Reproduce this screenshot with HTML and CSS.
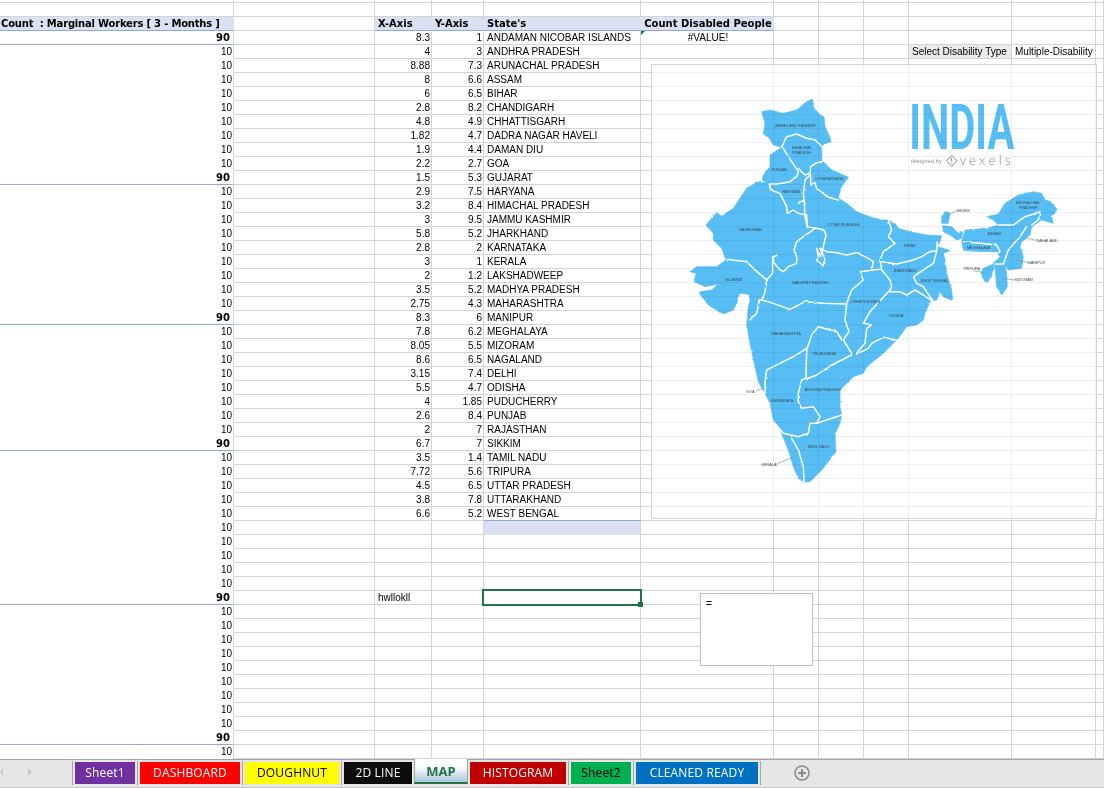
FILE: index.html
```html
<!DOCTYPE html>
<html lang="en">

<head>
  <meta charset="UTF-8">
  <title>MAP - Disability workbook</title>
  <link rel="stylesheet" href="styles.css">
</head>

<body>
  <div class="sheet">
    <table class="cells">
      <colgroup>
        <col class="col-a"><col class="col-b"><col class="col-c"><col class="col-d"><col class="col-e"><col class="col-f">
        <col class="col-g"><col class="col-g"><col class="col-g"><col class="col-j"><col class="col-k"><col class="col-l">
      </colgroup>
      <tr class="stub"><td></td><td></td><td></td><td></td><td></td><td></td><td></td><td></td><td></td><td></td><td></td><td></td></tr>
      <tr><td></td><td></td><td></td><td></td><td></td><td></td><td></td><td></td><td></td><td></td><td></td><td></td></tr>
      <tr><td class="head head-long">Count&nbsp; : Marginal Workers [ 3 - Months ]</td><td></td><td class="head">X-Axis</td><td class="head">Y-Axis</td><td class="head">State's</td><td class="head center">Count Disabled People</td><td></td><td></td><td></td><td></td><td></td><td></td></tr>
      <tr><td class="total">90</td><td></td><td class="num">8.3</td><td class="num">1</td><td>ANDAMAN NICOBAR ISLANDS</td><td class="center flagged">#VALUE!</td><td></td><td></td><td></td><td></td><td></td><td></td></tr>
      <tr><td class="count">10</td><td></td><td class="num">4</td><td class="num">3</td><td>ANDHRA PRADESH</td><td></td><td></td><td></td><td></td><td class="label">Select Disability Type</td><td>Multiple-Disability</td><td></td></tr>
      <tr><td class="count">10</td><td></td><td class="num">8.88</td><td class="num">7.3</td><td>ARUNACHAL PRADESH</td><td></td><td></td><td></td><td></td><td></td><td></td><td></td></tr>
      <tr><td class="count">10</td><td></td><td class="num">8</td><td class="num">6.6</td><td>ASSAM</td><td></td><td></td><td></td><td></td><td></td><td></td><td></td></tr>
      <tr><td class="count">10</td><td></td><td class="num">6</td><td class="num">6.5</td><td>BIHAR</td><td></td><td></td><td></td><td></td><td></td><td></td><td></td></tr>
      <tr><td class="count">10</td><td></td><td class="num">2.8</td><td class="num">8.2</td><td>CHANDIGARH</td><td></td><td></td><td></td><td></td><td></td><td></td><td></td></tr>
      <tr><td class="count">10</td><td></td><td class="num">4.8</td><td class="num">4.9</td><td>CHHATTISGARH</td><td></td><td></td><td></td><td></td><td></td><td></td><td></td></tr>
      <tr><td class="count">10</td><td></td><td class="num">1.82</td><td class="num">4.7</td><td>DADRA NAGAR HAVELI</td><td></td><td></td><td></td><td></td><td></td><td></td><td></td></tr>
      <tr><td class="count">10</td><td></td><td class="num">1.9</td><td class="num">4.4</td><td>DAMAN DIU</td><td></td><td></td><td></td><td></td><td></td><td></td><td></td></tr>
      <tr><td class="count">10</td><td></td><td class="num">2.2</td><td class="num">2.7</td><td>GOA</td><td></td><td></td><td></td><td></td><td></td><td></td><td></td></tr>
      <tr><td class="total">90</td><td></td><td class="num">1.5</td><td class="num">5.3</td><td>GUJARAT</td><td></td><td></td><td></td><td></td><td></td><td></td><td></td></tr>
      <tr><td class="count">10</td><td></td><td class="num">2.9</td><td class="num">7.5</td><td>HARYANA</td><td></td><td></td><td></td><td></td><td></td><td></td><td></td></tr>
      <tr><td class="count">10</td><td></td><td class="num">3.2</td><td class="num">8.4</td><td>HIMACHAL PRADESH</td><td></td><td></td><td></td><td></td><td></td><td></td><td></td></tr>
      <tr><td class="count">10</td><td></td><td class="num">3</td><td class="num">9.5</td><td>JAMMU KASHMIR</td><td></td><td></td><td></td><td></td><td></td><td></td><td></td></tr>
      <tr><td class="count">10</td><td></td><td class="num">5.8</td><td class="num">5.2</td><td>JHARKHAND</td><td></td><td></td><td></td><td></td><td></td><td></td><td></td></tr>
      <tr><td class="count">10</td><td></td><td class="num">2.8</td><td class="num">2</td><td>KARNATAKA</td><td></td><td></td><td></td><td></td><td></td><td></td><td></td></tr>
      <tr><td class="count">10</td><td></td><td class="num">3</td><td class="num">1</td><td>KERALA</td><td></td><td></td><td></td><td></td><td></td><td></td><td></td></tr>
      <tr><td class="count">10</td><td></td><td class="num">2</td><td class="num">1.2</td><td>LAKSHADWEEP</td><td></td><td></td><td></td><td></td><td></td><td></td><td></td></tr>
      <tr><td class="count">10</td><td></td><td class="num">3.5</td><td class="num">5.2</td><td>MADHYA PRADESH</td><td></td><td></td><td></td><td></td><td></td><td></td><td></td></tr>
      <tr><td class="count">10</td><td></td><td class="num">2.75</td><td class="num">4.3</td><td>MAHARASHTRA</td><td></td><td></td><td></td><td></td><td></td><td></td><td></td></tr>
      <tr><td class="total">90</td><td></td><td class="num">8.3</td><td class="num">6</td><td>MANIPUR</td><td></td><td></td><td></td><td></td><td></td><td></td><td></td></tr>
      <tr><td class="count">10</td><td></td><td class="num">7.8</td><td class="num">6.2</td><td>MEGHALAYA</td><td></td><td></td><td></td><td></td><td></td><td></td><td></td></tr>
      <tr><td class="count">10</td><td></td><td class="num">8.05</td><td class="num">5.5</td><td>MIZORAM</td><td></td><td></td><td></td><td></td><td></td><td></td><td></td></tr>
      <tr><td class="count">10</td><td></td><td class="num">8.6</td><td class="num">6.5</td><td>NAGALAND</td><td></td><td></td><td></td><td></td><td></td><td></td><td></td></tr>
      <tr><td class="count">10</td><td></td><td class="num">3.15</td><td class="num">7.4</td><td>DELHI</td><td></td><td></td><td></td><td></td><td></td><td></td><td></td></tr>
      <tr><td class="count">10</td><td></td><td class="num">5.5</td><td class="num">4.7</td><td>ODISHA</td><td></td><td></td><td></td><td></td><td></td><td></td><td></td></tr>
      <tr><td class="count">10</td><td></td><td class="num">4</td><td class="num">1.85</td><td>PUDUCHERRY</td><td></td><td></td><td></td><td></td><td></td><td></td><td></td></tr>
      <tr><td class="count">10</td><td></td><td class="num">2.6</td><td class="num">8.4</td><td>PUNJAB</td><td></td><td></td><td></td><td></td><td></td><td></td><td></td></tr>
      <tr><td class="count">10</td><td></td><td class="num">2</td><td class="num">7</td><td>RAJASTHAN</td><td></td><td></td><td></td><td></td><td></td><td></td><td></td></tr>
      <tr><td class="total">90</td><td></td><td class="num">6.7</td><td class="num">7</td><td>SIKKIM</td><td></td><td></td><td></td><td></td><td></td><td></td><td></td></tr>
      <tr><td class="count">10</td><td></td><td class="num">3.5</td><td class="num">1.4</td><td>TAMIL NADU</td><td></td><td></td><td></td><td></td><td></td><td></td><td></td></tr>
      <tr><td class="count">10</td><td></td><td class="num">7.72</td><td class="num">5.6</td><td>TRIPURA</td><td></td><td></td><td></td><td></td><td></td><td></td><td></td></tr>
      <tr><td class="count">10</td><td></td><td class="num">4.5</td><td class="num">6.5</td><td>UTTAR PRADESH</td><td></td><td></td><td></td><td></td><td></td><td></td><td></td></tr>
      <tr><td class="count">10</td><td></td><td class="num">3.8</td><td class="num">7.8</td><td>UTTARAKHAND</td><td></td><td></td><td></td><td></td><td></td><td></td><td></td></tr>
      <tr><td class="count">10</td><td></td><td class="num">6.6</td><td class="num">5.2</td><td class="last-state">WEST BENGAL</td><td></td><td></td><td></td><td></td><td></td><td></td><td></td></tr>
      <tr><td class="count">10</td><td></td><td></td><td></td><td class="band"></td><td></td><td></td><td></td><td></td><td></td><td></td><td></td></tr>
      <tr><td class="count">10</td><td></td><td></td><td></td><td></td><td></td><td></td><td></td><td></td><td></td><td></td><td></td></tr>
      <tr><td class="count">10</td><td></td><td></td><td></td><td></td><td></td><td></td><td></td><td></td><td></td><td></td><td></td></tr>
      <tr><td class="count">10</td><td></td><td></td><td></td><td></td><td></td><td></td><td></td><td></td><td></td><td></td><td></td></tr>
      <tr><td class="count">10</td><td></td><td></td><td></td><td></td><td></td><td></td><td></td><td></td><td></td><td></td><td></td></tr>
      <tr><td class="total">90</td><td></td><td>hwllokll</td><td></td><td class="active"></td><td></td><td></td><td></td><td></td><td></td><td></td><td></td></tr>
      <tr><td class="count">10</td><td></td><td></td><td></td><td></td><td></td><td></td><td></td><td></td><td></td><td></td><td></td></tr>
      <tr><td class="count">10</td><td></td><td></td><td></td><td></td><td></td><td></td><td></td><td></td><td></td><td></td><td></td></tr>
      <tr><td class="count">10</td><td></td><td></td><td></td><td></td><td></td><td></td><td></td><td></td><td></td><td></td><td></td></tr>
      <tr><td class="count">10</td><td></td><td></td><td></td><td></td><td></td><td></td><td></td><td></td><td></td><td></td><td></td></tr>
      <tr><td class="count">10</td><td></td><td></td><td></td><td></td><td></td><td></td><td></td><td></td><td></td><td></td><td></td></tr>
      <tr><td class="count">10</td><td></td><td></td><td></td><td></td><td></td><td></td><td></td><td></td><td></td><td></td><td></td></tr>
      <tr><td class="count">10</td><td></td><td></td><td></td><td></td><td></td><td></td><td></td><td></td><td></td><td></td><td></td></tr>
      <tr><td class="count">10</td><td></td><td></td><td></td><td></td><td></td><td></td><td></td><td></td><td></td><td></td><td></td></tr>
      <tr><td class="count">10</td><td></td><td></td><td></td><td></td><td></td><td></td><td></td><td></td><td></td><td></td><td></td></tr>
      <tr><td class="total">90</td><td></td><td></td><td></td><td></td><td></td><td></td><td></td><td></td><td></td><td></td><td></td></tr>
      <tr><td class="count">10</td><td></td><td></td><td></td><td></td><td></td><td></td><td></td><td></td><td></td><td></td><td></td></tr>
    </table>

    <!-- map picture floats over the cells -->
    <div class="picture">
      <svg class="map" viewBox="6 15 1332 1359" width="444" height="453">
        <filter id="rough" x="0" y="0" width="100%" height="100%">
          <feTurbulence type="fractalNoise" baseFrequency="0.05" numOctaves="2" seed="4"/>
          <feDisplacementMap in="SourceGraphic" scale="6" xChannelSelector="R" yChannelSelector="G"/>
        </filter>
        <g filter="url(#rough)">
          <g class="land">
            <path d="M335 155 360 150 400 160 440 150 470 125 488 117 490 140 510 165 522 170 525 200 540 232 543 245 522 252 515 260 516 305 520 305 545 330 596 352 585 365 572 385 565 415 590 430 620 455 660 470 695 480 715 480 735 490 745 505 780 515 830 525 875 527 870 545 860 560 880 565 900 572 880 580 885 600 890 640 905 690 908 722 880 710 870 695 860 720 840 725 825 760 820 780 800 795 770 800 745 835 700 880 650 920 640 940 610 950 590 970 570 990 570 1040 575 1065 570 1090 555 1120 558 1175 520 1225 495 1250 480 1265 462 1267 445 1255 430 1220 415 1170 390 1110 370 1080 360 1030 345 1000 325 965 315 920 300 850 290 795 295 740 300 722 295 703 270 700 262 715 262 725 250 750 220 762 175 735 148 700 150 695 185 690 205 672 165 680 132 665 138 640 120 635 140 620 200 620 228 600 215 565 190 540 190 520 168 495 185 475 200 458 215 468 250 445 290 385 320 367 350 368 336 360 340 345 360 320 360 285 395 262 370 255 358 235 340 222 345 190Z"/>
            <path d="M875 470 885 455 900 458 895 490 875 490Z"/>
            <path d="M878 497 905 500 925 520 938 515 935 535 920 540 900 525 880 515Z"/>
            <path d="M1010 470 1045 462 1065 430 1105 405 1150 395 1175 400 1185 420 1205 425 1222 450 1205 470 1210 490 1175 480 1145 500 1140 525 1115 545 1110 560 1120 590 1115 625 1075 630 1065 618 1070 640 1072 680 1055 705 1040 680 1035 625 1030 610 1050 590 1040 575 960 575 940 570 935 545 945 510 1010 505 1045 495 1030 480Z"/>
            <path d="M1030 612 1032 625 1015 665 1005 665 993 640 1000 625Z"/>
          </g>
          <g class="borders">
            <path d="M395 262 405 240 410 230 440 222 470 235 495 240 515 258"/>
            <path d="M400 265 415 290 445 335 440 350 420 365 385 372 358 372 362 390 390 400 410 440 412 460 430 450 445 460 470 465 472 500"/>
            <path d="M445 325 465 345 480 340 482 320 500 308 516 305"/>
            <path d="M480 345 465 360 460 400 463 430 465 470 472 500"/>
            <path d="M482 345 482 375 495 368 500 385 520 400 535 412 565 420"/>
            <path d="M445 430 462 420 465 435"/>
            <path d="M472 500 500 505 522 510 528 525 520 560 512 590 500 565 505 590 500 600 520 618 525 595 510 565 530 575 560 578 590 585 620 578 655 595 670 605 665 630 690 628"/>
            <path d="M495 505 440 545 432 570 440 590 440 610 415 620 400 635 385 625 370 605 370 590 385 585 368 590 368 640 350 660 310 625 290 605 230 598"/>
            <path d="M350 660 345 695 340 710 335 720 355 725 420 748 465 725 520 730 585 732"/>
            <path d="M300 780 320 760 328 720 335 720"/>
            <path d="M715 480 725 510 715 530 735 550 700 575 690 600 695 628"/>
            <path d="M695 605 740 612 790 600 815 590 840 575 860 572 862 545"/>
            <path d="M860 575 850 610 790 650 800 670 820 680 830 695 850 725"/>
            <path d="M670 630 630 635 640 660 605 690 590 730 585 780 597 815 580 840 605 880"/>
            <path d="M695 630 720 660 725 680 720 690 660 755 640 790 665 795 650 805 645 850 620 880"/>
            <path d="M720 695 750 695 770 705 795 690 820 705 850 725"/>
            <path d="M620 882 655 865 665 850 700 832 740 840"/>
            <path d="M605 885 545 915 500 945 470 957"/>
            <path d="M575 840 560 815 505 800 485 825 470 870 468 955 455 960 445 1000 445 1025 455 1045 490 1040 510 1070 500 1090 575 1065"/>
            <path d="M470 865 430 890 400 905 350 930 345 965 345 1000"/>
            <path d="M375 1090 400 1120 445 1130 475 1120 480 1090 505 1090"/>
            <path d="M425 1135 445 1170 460 1220 462 1265"/>
            <path d="M1045 495 1090 495 1125 470 1170 455 1165 480 1145 495"/>
            <path d="M940 545 990 550 1040 555 1050 575 1040 582 950 575"/>
            <path d="M1130 500 1110 530 1075 570 1060 612 1035 612"/>
          </g>
        </g>
        <g class="leaders">
          <path d="M890 468 920 452"/>
          <path d="M1125 533 1158 541"/>
          <path d="M1098 600 1132 606"/>
          <path d="M1060 655 1092 660"/>
          <path d="M970 632 1005 638"/>
          <path d="M318 992 340 985"/>
          <path d="M380 1212 428 1192"/>
        </g>
        <g class="names">
          <text x="435" y="202">JAMMU AND KASHMIR</text>
          <text x="455" y="267">HIMACHAL</text>
          <text x="455" y="283">PRADESH</text>
          <text x="387" y="334">PUNJAB</text>
          <text x="539" y="359">UTTARAKHAND</text>
          <text x="423" y="400">HARYANA</text>
          <text x="301" y="514">RAJASTHAN</text>
          <text x="580" y="499">UTTAR PRADESH</text>
          <text x="780" y="560">BIHAR</text>
          <text x="765" y="637">JHARKHAND</text>
          <text x="854" y="667">WEST BENGAL</text>
          <text x="252" y="664">GUJARAT</text>
          <text x="480" y="672">MADHYA PRADESH</text>
          <text x="939" y="456">SIKKIM</text>
          <text x="1134" y="432">ARUNACHAL</text>
          <text x="1134" y="448">PRADESH</text>
          <text x="1032" y="526">ASSAM</text>
          <text x="985" y="566">MEGHALAYA</text>
          <text x="1191" y="545">NAGALAND</text>
          <text x="1159" y="612">MANIPUR</text>
          <text x="1121" y="663">MIZORAM</text>
          <text x="965" y="629">TRIPURA</text>
          <text x="646" y="729">CHHATTISGARH</text>
          <text x="738" y="771">ODISHA</text>
          <text x="408" y="824">MAHARASHTRA</text>
          <text x="522" y="885">TELANGANA</text>
          <text x="518" y="992">ANDHRA PRADESH</text>
          <text x="396" y="1026">KARNATAKA</text>
          <text x="301" y="998">GOA</text>
          <text x="505" y="1164">TAMIL NADU</text>
          <text x="357" y="1217">KERALA</text>
        </g>
        <text class="title" x="778" y="268" textLength="315" lengthAdjust="spacingAndGlyphs">INDIA</text>
        <text class="credit" x="782" y="308" textLength="94" lengthAdjust="spacingAndGlyphs">designed by</text>
        <g class="vexels-mark">
          <path d="M905 286 921 302 905 319 889 302Z"/>
          <path d="M905 292V304M905 308V311"/>
        </g>
        <text class="vexels" x="930" y="314" textLength="152">vexels</text>
      </svg>
    </div>

    <div class="textbox">=</div>
  </div>

  <div class="tabbar">
    <div class="tab-nav">
      <svg width="70" height="24" viewBox="0 0 70 24">
        <path class="nav-off" d="M3 8V16L0 12Z"/>
        <path class="nav-off" d="M28 8 32 12 28 16Z"/>
      </svg>
    </div>
    <span class="sep"></span>
    <a class="tab tab-sheet1">Sheet1</a>
    <span class="sep"></span>
    <a class="tab tab-dashboard">DASHBOARD</a>
    <span class="sep"></span>
    <a class="tab tab-doughnut">DOUGHNUT</a>
    <span class="sep"></span>
    <a class="tab tab-line">2D LINE</a>
    <a class="tab tab-map">MAP</a>
    <a class="tab tab-histogram">HISTOGRAM</a>
    <span class="sep"></span>
    <a class="tab tab-sheet2">Sheet2</a>
    <span class="sep"></span>
    <a class="tab tab-cleaned">CLEANED READY</a>
    <span class="sep"></span>
    <svg class="add-sheet" width="16" height="16" viewBox="0 0 16 16">
      <circle cx="8" cy="8" r="7"/>
      <path d="M8 4V12M4 8H12"/>
    </svg>
  </div>
</body>

</html>
```

FILE: styles.css
```css
html,
body {
  margin: 0;
  padding: 0;
  height: 100%;
  background: #fff;
  overflow: hidden;
}

body {
  display: flex;
  flex-direction: column;
  font-family: "Liberation Sans", Arial, sans-serif;
}

.sheet {
  position: relative;
  height: 759px;
  overflow: hidden;
}

/* cells */
.cells {
  table-layout: fixed;
  border-collapse: separate;
  border-spacing: 0;
  width: 1104px;
  font-size: 10px;
  line-height: 13px;
  color: #000;
}

.col-a { width: 234px; }
.col-b { width: 141px; }
.col-c { width: 57px; }
.col-d { width: 52px; }
.col-e { width: 157px; }
.col-f { width: 133px; }
.col-g { width: 45px; }
.col-j { width: 103px; }
.col-k { width: 84px; }
.col-l { width: 8px; }

.cells td {
  height: 13px;
  padding: 0 1px 0 3px;
  box-sizing: content-box;
  border-right: 1px solid #d4d4d4;
  border-bottom: 1px solid #d4d4d4;
  white-space: nowrap;
  vertical-align: middle;
}

.cells .stub td {
  height: 2px;
  line-height: 2px;
}

.cells .head {
  background: #d9e1f2;
  border-right-color: #d9e1f2;
  border-bottom-color: #8ea9db;
  font-family: "DejaVu Sans", sans-serif;
  font-size: 10px;
  font-weight: bold;
}

.cells .head-long {
  padding-left: 1px;
  letter-spacing: -0.2px;
}

.cells .num {
  text-align: right;
}

.cells .center {
  text-align: center;
}

.cells .count {
  text-align: right;
  border-bottom-color: transparent;
}

.cells .total {
  padding-right: 3px;
  text-align: right;
  border-bottom-color: #8ea9db;
  font-family: "DejaVu Sans", sans-serif;
  font-size: 10px;
  font-weight: bold;
}

.cells .label {
  background: #ebe9ec;
}

.cells .last-state {
  border-bottom-color: #8ea9db;
}

.cells .band {
  background: #d9e1f2;
  border-bottom-color: #d9e1f2;
}

.cells .flagged,
.cells .active {
  position: relative;
}

.cells .flagged::before {
  content: "";
  position: absolute;
  top: 0;
  left: 0;
  border-top: 4px solid #107c41;
  border-right: 4px solid transparent;
}

.cells .active::before {
  content: "";
  position: absolute;
  top: -2px;
  left: -2px;
  right: -2px;
  bottom: -2px;
  border: 2px solid #217346;
}

.cells .active::after {
  content: "";
  position: absolute;
  right: -3px;
  bottom: -3px;
  width: 5px;
  height: 5px;
  background: #217346;
}

/* picture over the cells */
.picture {
  position: absolute;
  top: 64px;
  left: 651px;
  width: 444px;
  height: 453px;
  background: rgba(255, 255, 255, 0.62);
  border: 1px solid #d4d4d4;
}

.map {
  display: block;
  mix-blend-mode: multiply;
  filter: blur(0.3px);
}

.land path {
  fill: #56bdf5;
  stroke: #56bdf5;
  stroke-width: 2;
  stroke-linejoin: round;
}

.borders path {
  fill: none;
  stroke: #fff;
  stroke-width: 4.5;
  stroke-linejoin: round;
  stroke-linecap: round;
}

.leaders path {
  fill: none;
  stroke: #8a8a8a;
  stroke-width: 2;
}

.names text {
  font-family: "Liberation Sans", sans-serif;
  font-size: 12px;
  letter-spacing: -0.3px;
  text-anchor: middle;
  fill: #3f4f5c;
}

.title {
  font-family: Roboto, sans-serif;
  font-size: 191px;
  font-weight: 700;
  fill: #56bdf5;
}

.credit {
  font-family: "Liberation Sans", sans-serif;
  font-size: 18px;
  fill: #8f8f8f;
}

.vexels-mark path {
  fill: none;
  stroke: #8a8a8a;
  stroke-width: 3;
  stroke-linejoin: round;
}

.vexels {
  font-family: "Open Sans", sans-serif;
  font-size: 38px;
  font-weight: 300;
  fill: #8a8a8a;
}

.textbox {
  position: absolute;
  top: 593px;
  left: 700px;
  width: 101px;
  height: 67px;
  padding: 4px 5px 0;
  background: #fff;
  border: 1px solid #bfbfbf;
  font-size: 10px;
  line-height: 12px;
}

/* sheet tabs */
.tabbar {
  display: flex;
  align-items: flex-start;
  height: 27px;
  background: #e6e6e6;
  border-top: 1px solid #a3a3a3;
  border-bottom: 1px solid #c9c9c9;
  font-family: "Open Sans", sans-serif;
  font-size: 12px;
}

.tab-nav {
  width: 70px;
  height: 24px;
}

.nav-off {
  fill: #c8c8c8;
}

.sep {
  width: 1px;
  height: 24px;
  margin: 1px 2px 0;
  background: #a6a6a6;
}

.tab {
  height: 22px;
  margin-top: 2px;
  line-height: 22px;
  letter-spacing: 0.15px;
  text-align: center;
  color: #fff;
}

.tab-sheet1 { width: 60px; background: #7030a0; }
.tab-dashboard { width: 100px; background: #ff0000; }
.tab-doughnut { width: 94px; background: #ffff00; color: #000; }
.tab-line { width: 68px; background: #0d0d0d; }
.tab-histogram { width: 96px; margin-left: 2px; background: #c00000; }
.tab-sheet2 { width: 60px; background: #00b050; color: #000; }
.tab-cleaned { width: 122px; background: #0070c0; }

.tab-map {
  box-sizing: border-box;
  width: 54px;
  height: 25px;
  margin: -1px 0 0 2px;
  padding-top: 1px;
  background: linear-gradient(#fff 30%, #a9c8dc);
  border-left: 1px solid #a3a3a3;
  border-right: 1px solid #a3a3a3;
  border-bottom: 2px solid #217346;
  color: #217346;
  font-weight: bold;
  font-size: 13px;
  letter-spacing: 0;
}

.add-sheet {
  margin: 5px 0 0 31px;
}

.add-sheet circle {
  fill: none;
  stroke: #8a8a8a;
  stroke-width: 1.5;
}

.add-sheet path {
  fill: none;
  stroke: #8a8a8a;
  stroke-width: 2;
}
```
